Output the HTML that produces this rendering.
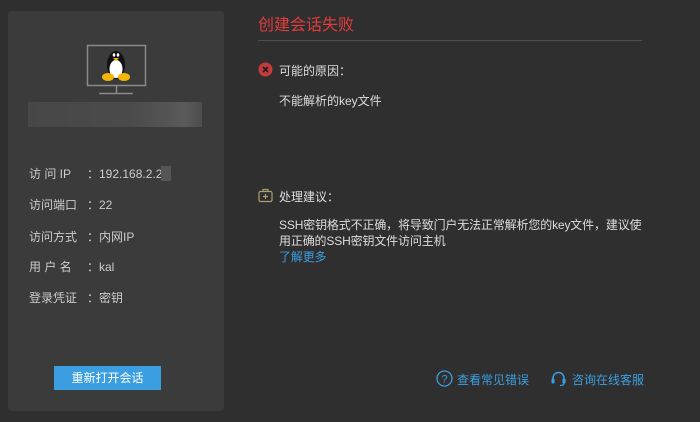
<!DOCTYPE html>
<html><head><meta charset="utf-8"><style>
body{margin:0;width:700px;height:422px;background:#2f2f2f;font-family:"Liberation Sans","Noto Sans CJK SC",sans-serif;color:#ddd;font-size:12px;position:relative;overflow:hidden}
.a{position:absolute;white-space:nowrap}
.card{position:absolute;left:8px;top:11px;width:216px;height:400px;background:#3b3b3b;border-radius:3px}
.lbl{color:#ccc;font-size:12px}
</style></head><body>
<div class="card"></div>
<svg class="a" style="left:86px;top:44px" width="62" height="52" viewBox="0 0 62 52">
<rect x="1.5" y="1.5" width="58" height="40" fill="none" stroke="#8a8a8a" stroke-width="1.5"/>
<line x1="30.5" y1="42" x2="30.5" y2="49" stroke="#8a8a8a" stroke-width="1.5"/>
<line x1="13" y1="49.5" x2="47" y2="49.5" stroke="#8a8a8a" stroke-width="1.5"/>
<ellipse cx="30" cy="21" rx="9" ry="14" fill="#111"/>
<ellipse cx="30" cy="25" rx="6.5" ry="9" fill="#fff"/>
<ellipse cx="28" cy="11" rx="1.3" ry="1.7" fill="#fff"/><ellipse cx="32" cy="11" rx="1.3" ry="1.7" fill="#fff"/>
<path d="M27 14 L33 14 L30 17Z" fill="#f2b705"/>
<ellipse cx="22" cy="33" rx="6" ry="4" fill="#f2b705"/><ellipse cx="38" cy="33" rx="6" ry="4" fill="#f2b705"/>
</svg>
<div class="a" style="left:28px;top:102px;width:174px;height:25px;background:linear-gradient(90deg,#474747,#4b4b4b 60%,#5a5a5a 90%,#4d4d4d)"></div>
<div class="a lbl" style="left:29px;top:165px">访 问 IP</div><div class="a lbl" style="left:87px;top:165px">：192.168.2.2</div><div class="a" style="left:161px;top:166px;width:10px;height:15px;background:#555"></div>
<div class="a lbl" style="left:29px;top:196px">访问端口</div><div class="a lbl" style="left:87px;top:196px">：22</div>
<div class="a lbl" style="left:29px;top:228px">访问方式</div><div class="a lbl" style="left:87px;top:228px">：内网IP</div>
<div class="a lbl" style="left:29px;top:258px">用 户 名</div><div class="a lbl" style="left:87px;top:258px">：kal</div>
<div class="a lbl" style="left:29px;top:289px">登录凭证</div><div class="a lbl" style="left:87px;top:289px">：密钥</div>
<div class="a" style="left:54px;top:366px;width:107px;height:24px;background:#3b9ee0;color:#fff;text-align:center;line-height:24px;font-size:12px">重新打开会话</div>
<div class="a" style="left:258px;top:11px;color:#e23b3b;font-size:16px">创建会话失败</div>
<div class="a" style="left:258px;top:40px;width:384px;height:1px;background:#4e4e4e"></div>
<svg class="a" style="left:258px;top:62px" width="15" height="15"><circle cx="7.5" cy="7.5" r="7" fill="#c53a3a"/><path d="M5 5L10 10M10 5L5 10" stroke="#222" stroke-width="1.8"/></svg>
<div class="a" style="left:279px;top:62px;color:#ddd">可能的原因：</div>
<div class="a" style="left:279px;top:92px;color:#ddd">不能解析的key文件</div>
<svg class="a" style="left:258px;top:187px" width="16" height="16"><rect x="1" y="4.5" width="13" height="10" rx="1.5" fill="none" stroke="#a8a070" stroke-width="1.2"/><path d="M5 4.5V2.5h5v2" fill="none" stroke="#a8a070" stroke-width="1.2"/><path d="M7.5 7v5M5 9.5h5" stroke="#a8a070" stroke-width="1.2"/></svg>
<div class="a" style="left:279px;top:188px;color:#ddd">处理建议：</div>
<div class="a" style="left:279px;top:217px;color:#ddd;line-height:16px;letter-spacing:-0.15px">SSH密钥格式不正确，将导致门户无法正常解析您的key文件，建议使<br>用正确的SSH密钥文件访问主机<br><span style="color:#3b9ee0">了解更多</span></div>
<svg class="a" style="left:436px;top:370px" width="17" height="17"><circle cx="8.5" cy="8.5" r="7.5" fill="none" stroke="#3b9ee0" stroke-width="1.3"/><text x="8.5" y="12.5" fill="#3b9ee0" font-size="11" text-anchor="middle" font-family="Liberation Sans">?</text></svg>
<div class="a" style="left:457px;top:371px;color:#3b9ee0">查看常见错误</div>
<svg class="a" style="left:550px;top:370px" width="17" height="17"><path d="M3 10V8a5.5 5.5 0 0 1 11 0v2" fill="none" stroke="#3b9ee0" stroke-width="1.5"/><rect x="1.5" y="8.5" width="3" height="5" rx="1" fill="#3b9ee0"/><rect x="12.5" y="8.5" width="3" height="5" rx="1" fill="#3b9ee0"/><path d="M14 13.5q0 2-4 2" fill="none" stroke="#3b9ee0" stroke-width="1.2"/></svg>
<div class="a" style="left:572px;top:371px;color:#3b9ee0">咨询在线客服</div>
</body></html>
